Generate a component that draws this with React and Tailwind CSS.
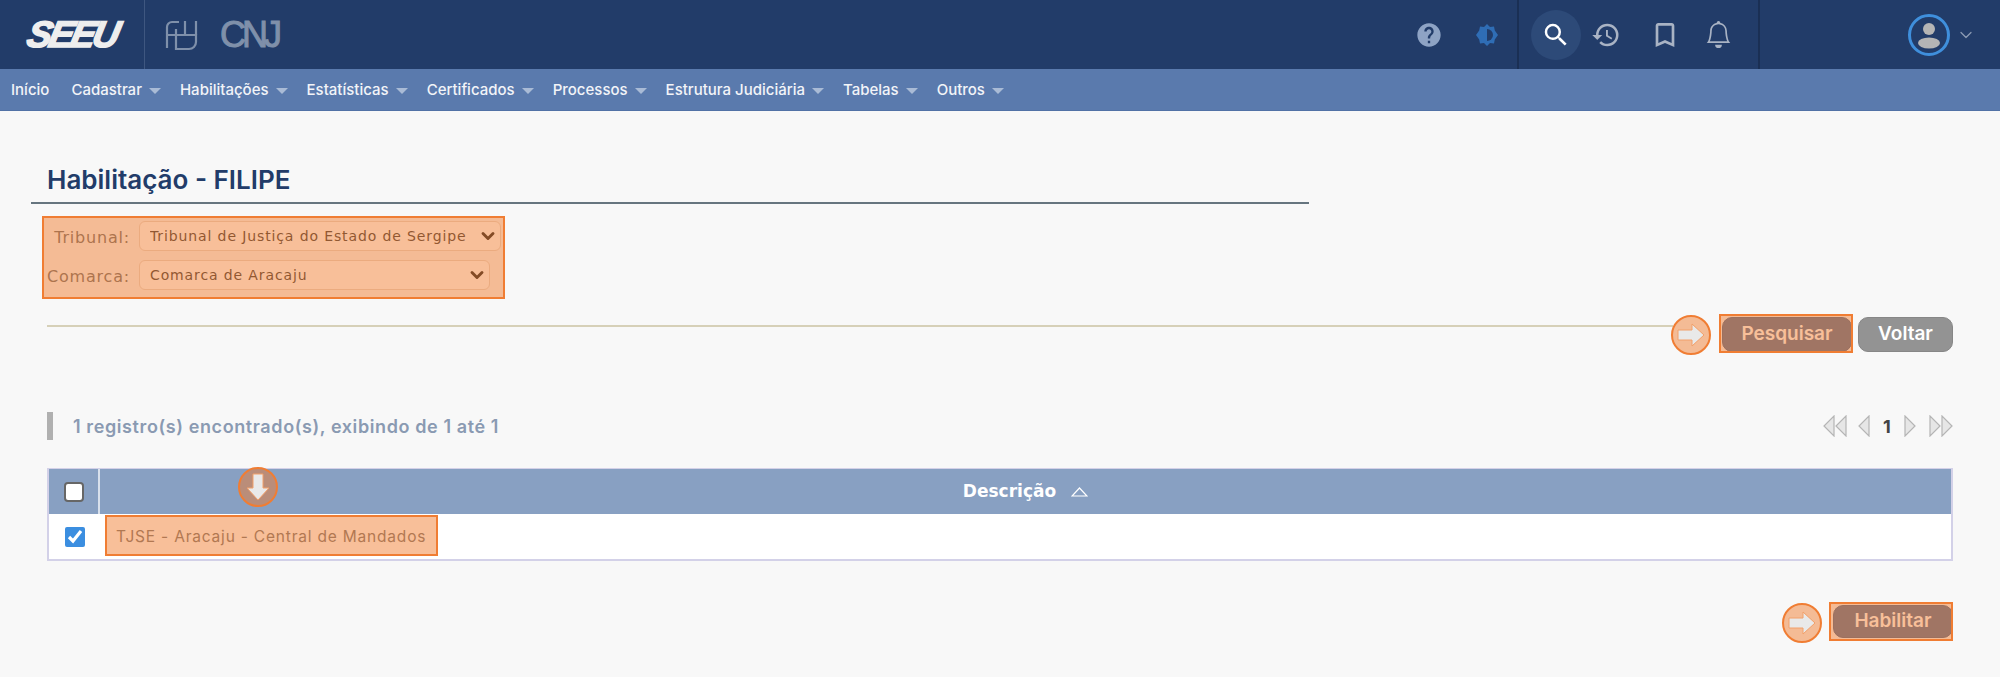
import React from "react";
import { ChevronDown } from "lucide-react";
import { MdSearch, MdHistory, MdBookmarkBorder, MdHelp } from "react-icons/md";
import { BsBell } from "react-icons/bs";

const menus = ["Cadastrar", "Habilitações", "Estatísticas", "Certificados", "Processos", "Estrutura Judiciária", "Tabelas", "Outros"];

// Orange highlight drawn over the screen by the tutorial
const Highlight = ({ className }) => (
  <div className={`absolute z-10 bg-[#f07a2a]/[0.48] border-2 border-[#f07d33] pointer-events-none ${className}`} />
);

const ArrowMark = ({ className, down }) => (
  <div className={`absolute z-10 flex items-center justify-center w-10 h-10 rounded-full bg-[#f07a2a]/[0.48] border-2 border-[#f07d33] ${className}`}>
    <svg width="30" height="26" viewBox="0 0 30 26" className={down ? "rotate-90" : ""}>
      <path d="M2 8h14V2l12 11-12 11v-6H2z" fill="#e9e9e9" stroke="#f2a06a" strokeWidth="1" />
    </svg>
  </div>
);

const PagerArrow = ({ dir }) => (
  <svg width="12" height="22" viewBox="0 0 12 22">
    <path d={dir === "left" ? "M11 1v20L1 11z" : "M1 1v20l10-10z"} fill="#e6e6e6" stroke="#b5b5b5" strokeWidth="1.2" />
  </svg>
);

const SelectField = ({ label, value, width }) => (
  <label className="flex items-center gap-[9px]">
    <span className="w-[83px] pt-[3px] text-right whitespace-nowrap">{label}</span>
    <span className={`relative ${width}`}>
      <select defaultValue={value} className="w-full h-[30px] pl-[10px] pt-[1px] appearance-none rounded-md bg-white border border-[#e6d8cd] text-[14px] tracking-[0.88px] text-[#3a3a3a]">
        <option value={value}>{value}</option>
      </select>
      <ChevronDown className="absolute right-[3px] top-[5px] text-[#222]" size={20} strokeWidth={3.5} />
    </span>
  </label>
);

export default function App() {
  return (
    <div className="min-h-[677px] bg-[#f8f8f8] font-['Inter',sans-serif] overflow-hidden">
      {/* Top bar */}
      <header className="flex items-stretch h-[69px] bg-[#223c69]">
        <div className="flex items-center justify-center w-[145px] border-r border-[#3f5780]">
          <span className="font-['Liberation_Sans',sans-serif] font-bold italic text-[37px] leading-none tracking-[-3px] text-[#eeeeee] -skew-x-12 [-webkit-text-stroke:1.5px_#eeeeee]">SEEU</span>
        </div>
        <div className="flex items-center pl-5 gap-[21px] text-[#7f90aa]">
          <svg width="34" height="34" viewBox="0 0 34 34" fill="none" stroke="currentColor" strokeWidth="2.2">
            <path d="M14 4H7a5 5 0 0 0-5 5v21" />
            <path d="M2 17h29V24a7 7 0 0 1-7 7H11V11" />
            <path d="M20 3v14M31 3v14" />
          </svg>
          <span className="font-['Liberation_Sans',sans-serif] text-[36px] leading-none tracking-[-4px] [-webkit-text-stroke:1px_#7f90aa]">CNJ</span>
        </div>
        <div className="flex-1" />
        <div className="flex items-center text-[#a9b3c4]">
          <MdHelp className="text-[#8ea3c4]" size={28} />
          <svg className="ml-[32px] mr-[18px]" width="24" height="24" viewBox="0 0 24 24">
            <path d="M12 1l3 3 4-.5.8 4 3.200 4.500-3.200 4.500-.8 4-4-.5-3 3-3-3-4 .5-.8-4L1 12l3.200-4.500.8-4 4 .5z" fill="#2f6db5" />
            <path d="M12 6a6 6 0 0 1 0 12z" fill="#223c69" />
          </svg>
        </div>
        <div className="flex items-center w-[243px] pl-[12px] border-x-2 border-[#1a2f54] text-[#a9b3c4]">
          <div className="flex items-center justify-center w-[50px] h-[50px] rounded-full bg-[#2d4a78] text-white">
            <MdSearch size={30} />
          </div>
          <MdHistory className="ml-[10px]" size={30} />
          <MdBookmarkBorder className="ml-[28px]" size={32} />
          <BsBell className="ml-[24px]" size={27} />
        </div>
        <div className="flex items-center pl-[148px] pr-[24px] text-[#8b9ab3]">
          <div className="flex items-center justify-center w-[42px] h-[42px] rounded-full border-[3px] border-[#3f8fdc]">
            <svg width="26" height="28" viewBox="0 0 26 28" fill="#b5b5b5">
              <circle cx="13" cy="8" r="6" />
              <ellipse cx="13" cy="22" rx="11" ry="5.500" />
            </svg>
          </div>
          <ChevronDown className="ml-[6px]" size={20} strokeWidth={1.5} />
        </div>
      </header>

      {/* Menu */}
      <nav className="flex items-center gap-[19px] h-[42px] pt-[2px] pl-[11px] bg-[#5a7aad] border-b border-[#5272a6] text-[15px] font-medium text-[#f2f4f8]">
        <span className="mr-[3px]">Início</span>
        {menus.map((item) => (
          <span key={item} className="flex items-center gap-[7px]">
            {item}
            <span className="w-0 h-0 border-x-[6px] border-x-transparent border-t-[6px] border-t-[#a9bbd6]" />
          </span>
        ))}
      </nav>

      <main className="px-[47px]">
        <h1 className="-mx-4 w-[1278px] mt-[52px] pl-4 pb-[6px] border-b-2 border-[#66757f] text-[26px] leading-[33px] font-semibold text-[#223c69]">
          Habilitação - FILIPE
        </h1>

        {/* Filtro */}
        <div className="relative mt-[17px] flex flex-col gap-[9px] font-['DejaVu_Sans',sans-serif] text-[16px] tracking-[0.8px] text-[#6f6f6f]">
          <Highlight className="left-[-5px] top-[-5px] w-[463px] h-[83px]" />
          <SelectField label="Tribunal:" value="Tribunal de Justiça do Estado de Sergipe" width="w-[362px]" />
          <SelectField label="Comarca:" value="Comarca de Aracaju" width="w-[351px]" />
        </div>

        {/* Acoes */}
        <div className="relative flex items-center justify-end gap-[6px] mt-[26px] h-[36px]">
          <div className="absolute left-0 right-[280px] top-[9px] h-[2px] bg-[#d6d0b8]" />
          <ArrowMark className="right-[242px] top-[-1px]" />
          <div className="relative">
            <button className="block w-[130px] h-[35px] rounded-[10px] bg-[#577199] border border-[#4e6890] text-[19px] font-semibold text-white">Pesquisar</button>
            <Highlight className="left-[-3px] top-[-3px] w-[134px] h-[39px]" />
          </div>
          <button className="w-[95px] h-[35px] rounded-[10px] bg-[#939393] border border-[#878787] text-[19px] font-semibold text-white">Voltar</button>
        </div>

        {/* Resultado */}
        <div className="flex items-center justify-between mt-[60px] h-[28px]">
          <div className="flex items-center h-full border-l-[6px] border-[#b0b0b0] pl-5 text-[18px] tracking-[0.6px] font-semibold text-[#8a9ab2]">
            1 registro(s) encontrado(s), exibindo de 1 até 1
          </div>
          <div className="flex items-center text-[18px] font-bold text-[#444]">
            <PagerArrow dir="left" />
            <PagerArrow dir="left" />
            <span className="w-[11px]" />
            <PagerArrow dir="left" />
            <span className="w-[34px] text-center">1</span>
            <PagerArrow dir="right" />
            <span className="w-[13px]" />
            <PagerArrow dir="right" />
            <PagerArrow dir="right" />
          </div>
        </div>

        {/* Tabela */}
        <div className="relative mt-[28px] border-2 border-t border-[#d3d1e8] bg-white">
          <div className="flex items-center h-[45px] bg-[#88a0c2]">
            <div className="flex items-center justify-center w-[51px] h-full border-r-2 border-[#d8e0ec]">
              <input type="checkbox" readOnly className="w-5 h-5 appearance-none rounded bg-white border-2 border-[#666]" />
            </div>
            <div className="flex-1 flex items-center justify-center gap-[15px] font-['DejaVu_Sans',sans-serif] font-bold text-[17px] text-white">
              Descrição
              <svg width="17" height="10" viewBox="0 0 17 10">
                <path d="M8.500 1L16 9H1z" fill="none" stroke="#fff" strokeWidth="1.200" />
              </svg>
            </div>
          </div>
          <div className="flex items-center h-[45px]">
            <div className="flex items-center justify-center w-[51px] shrink-0">
              <input type="checkbox" checked readOnly className="w-5 h-5 accent-[#3b8ee0]" />
            </div>
            <span className="pl-[16px] text-[15.500px] tracking-[0.8px] text-[#777]">TJSE - Aracaju - Central de Mandados</span>
          </div>
          <ArrowMark down className="left-[189px] top-[-2px]" />
          <Highlight className="left-[56px] top-[46px] w-[333px] h-[41px]" />
        </div>

        {/* Habilitar */}
        <div className="relative flex justify-end mt-[44px]">
          <ArrowMark className="right-[131px] top-[-2px]" />
          <div className="relative">
            <button className="block w-[120px] h-[33px] rounded-[10px] bg-[#577199] border border-[#4e6890] text-[19px] font-semibold text-white">Habilitar</button>
            <Highlight className="left-[-4px] top-[-3px] w-[124px] h-[39px]" />
          </div>
        </div>
      </main>
    </div>
  );
}
